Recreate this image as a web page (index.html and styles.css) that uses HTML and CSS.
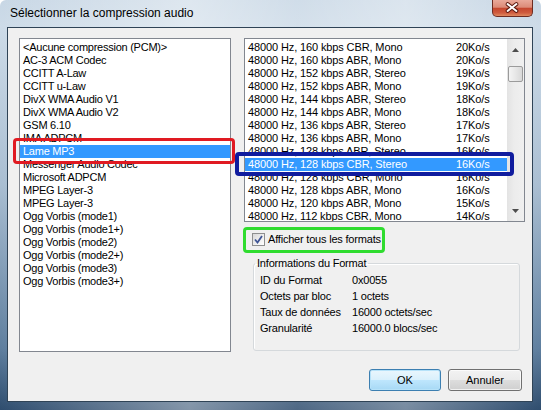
FILE: index.html
```html
<!DOCTYPE html>
<html lang="fr">
<head>
<meta charset="utf-8">
<title>Sélectionner la compression audio</title>
<link rel="stylesheet" href="styles.css">
</head>
<body>
<div class="window">
  <div class="titlebar">
    <span class="title">Sélectionner la compression audio</span>
    <div class="close">
      <svg width="41" height="17" viewBox="0 0 41 17">
        <path d="M16 5 L25 12 M25 5 L16 12" stroke="#5b1a10" stroke-width="4" stroke-linecap="round" fill="none"/>
        <path d="M16 5 L25 12 M25 5 L16 12" stroke="#ffffff" stroke-width="2" stroke-linecap="round" fill="none"/>
      </svg>
    </div>
  </div>
  <div class="client">
    <div class="main">
      <div class="list codecs">
        <div class="row">&lt;Aucune compression (PCM)&gt;</div>
        <div class="row">AC-3 ACM Codec</div>
        <div class="row">CCITT A-Law</div>
        <div class="row">CCITT u-Law</div>
        <div class="row">DivX WMA Audio V1</div>
        <div class="row">DivX WMA Audio V2</div>
        <div class="row">GSM 6.10</div>
        <div class="row">IMA ADPCM</div>
        <div class="row selected">Lame MP3</div>
        <div class="row">Messenger Audio Codec</div>
        <div class="row">Microsoft ADPCM</div>
        <div class="row">MPEG Layer-3</div>
        <div class="row">MPEG Layer-3</div>
        <div class="row">Ogg Vorbis (mode1)</div>
        <div class="row">Ogg Vorbis (mode1+)</div>
        <div class="row">Ogg Vorbis (mode2)</div>
        <div class="row">Ogg Vorbis (mode2+)</div>
        <div class="row">Ogg Vorbis (mode3)</div>
        <div class="row">Ogg Vorbis (mode3+)</div>
      </div>
      <div class="side">
        <div class="list formats">
          <div class="rows">
            <div class="row fmt"><span>48000 Hz, 160 kbps CBR, Mono</span><span>20Ko/s</span></div>
            <div class="row fmt"><span>48000 Hz, 160 kbps ABR, Mono</span><span>20Ko/s</span></div>
            <div class="row fmt"><span>48000 Hz, 152 kbps ABR, Stereo</span><span>19Ko/s</span></div>
            <div class="row fmt"><span>48000 Hz, 152 kbps ABR, Mono</span><span>19Ko/s</span></div>
            <div class="row fmt"><span>48000 Hz, 144 kbps ABR, Stereo</span><span>18Ko/s</span></div>
            <div class="row fmt"><span>48000 Hz, 144 kbps ABR, Mono</span><span>18Ko/s</span></div>
            <div class="row fmt"><span>48000 Hz, 136 kbps ABR, Stereo</span><span>17Ko/s</span></div>
            <div class="row fmt"><span>48000 Hz, 136 kbps ABR, Mono</span><span>17Ko/s</span></div>
            <div class="row fmt"><span>48000 Hz, 128 kbps ABR, Stereo</span><span>16Ko/s</span></div>
            <div class="row fmt selected"><span>48000 Hz, 128 kbps CBR, Stereo</span><span>16Ko/s</span></div>
            <div class="row fmt"><span>48000 Hz, 128 kbps CBR, Mono</span><span>16Ko/s</span></div>
            <div class="row fmt"><span>48000 Hz, 128 kbps ABR, Mono</span><span>16Ko/s</span></div>
            <div class="row fmt"><span>48000 Hz, 120 kbps ABR, Mono</span><span>15Ko/s</span></div>
            <div class="row fmt"><span>48000 Hz, 112 kbps CBR, Mono</span><span>14Ko/s</span></div>
          </div>
          <div class="scrollbar">
            <div class="arrow up"><svg width="7" height="4" viewBox="0 0 7 4"><path d="M0 4 L3.5 0 L7 4 Z" fill="#4d4d4d"/></svg></div>
            <div class="thumb"></div>
            <div class="arrow down"><svg width="7" height="4" viewBox="0 0 7 4"><path d="M0 0 L3.5 4 L7 0 Z" fill="#4d4d4d"/></svg></div>
          </div>
        </div>
        <label class="check">
          <span class="box"><svg width="11" height="11" viewBox="0 0 11 11"><path d="M2 5.5 L4.5 8.5 L9 2" stroke="#3e5495" stroke-width="1.8" fill="none"/></svg></span>
          <span>Afficher tous les formats</span>
        </label>
        <fieldset class="group">
          <legend>Informations du Format</legend>
          <div class="info">
            <span>ID du Format</span><span>0x0055</span>
            <span>Octets par bloc</span><span>1 octets</span>
            <span>Taux de données</span><span>16000 octets/sec</span>
            <span>Granularité</span><span>16000.0 blocs/sec</span>
          </div>
        </fieldset>
      </div>
    </div>
    <div class="buttons">
      <button class="btn default">OK</button>
      <button class="btn">Annuler</button>
    </div>
  </div>
  <div class="mark red"></div>
  <div class="mark blue"></div>
  <div class="mark green"></div>
</div>
</body>
</html>
```
FILE: styles.css
```css
* { box-sizing: border-box; }
html, body { margin: 0; padding: 0; }
body {
  width: 541px;
  height: 410px;
  overflow: hidden;
  font-family: "Liberation Sans", Arial, sans-serif;
  font-size: 11px;
  color: #000;
  background: #ffffff;
}
.window {
  position: relative;
  width: 541px;
  height: 410px;
  display: flex;
  flex-direction: column;
  padding: 0 8px 8px 7px;
  border-radius: 6px 6px 0 0;
  background:
    linear-gradient(90deg, rgba(255,255,255,0) 0, rgba(255,255,255,0.4) 35%, rgba(255,255,255,0.15) 55%, rgba(255,255,255,0.35) 75%, rgba(255,255,255,0) 100%),
    linear-gradient(180deg, #c8d7e5 0, #cddbe8 27px, #a9bed2 45%, #5f7f9f 85%, #2f4d6e 100%);
}
.titlebar {
  height: 27px;
  display: flex;
  align-items: flex-start;
}
.title {
  font-size: 12px;
  line-height: 14px;
  margin: 6px 0 0 3px;
  color: #000;
}
.close {
  margin-left: auto;
  width: 41px;
  height: 17px;
  border: 1px solid #6d2c22;
  border-top: none;
  border-radius: 0 0 5px 5px;
  background: linear-gradient(180deg, #e9a99a 0, #dc8b78 45%, #c5472f 52%, #cf5c3f 80%, #e08a60 100%);
  display: flex;
}
.close svg { margin: -1px 0 0 -1px; }
.client {
  flex: 1;
  background: #f0f0f0;
  border: 1px solid #2f4356;
  padding: 10px 7px 0 11px;
  display: flex;
  flex-direction: column;
}
.main {
  display: flex;
  gap: 13px;
}
.list {
  background: #fff;
  border: 1px solid #828790;
  overflow: hidden;
}
.codecs {
  width: 212px;
  height: 314px;
  padding-top: 2px;
  letter-spacing: -0.25px;
}
.row {
  height: 13px;
  line-height: 13px;
  padding-left: 3px;
  white-space: nowrap;
}
.row.selected {
  background: #3399ff;
  color: #fff;
}
.side {
  width: 281px;
  display: flex;
  flex-direction: column;
}
.formats {
  height: 184px;
  display: flex;
  letter-spacing: -0.12px;
}
.rows {
  flex: 1;
  padding-top: 2px;
  overflow: hidden;
}
.fmt {
  display: grid;
  grid-template-columns: 208px auto;
}
.scrollbar {
  width: 17px;
  background: linear-gradient(90deg, #e3e3e3 0, #ececec 40%, #f0f0f0 100%);
  display: flex;
  flex-direction: column;
  align-items: center;
}
.arrow {
  width: 17px;
  height: 17px;
  display: flex;
  align-items: center;
  justify-content: center;
}
.arrow.up { padding-top: 5px; }
.arrow.down { margin-top: auto; padding-bottom: 2px; margin-bottom: 1px; }
.thumb {
  width: 15px;
  height: 16px;
  margin-top: 10px;
  border: 1px solid #9b9b9b;
  border-radius: 2px;
  background: linear-gradient(90deg, #f4f4f4 0, #e7e7e7 50%, #d8d8d8 100%);
}
.check {
  margin: 11px 0 0 8px;
  height: 13px;
  display: flex;
  align-items: center;
  gap: 3px;
  line-height: 13px;
  letter-spacing: -0.2px;
}
.box {
  width: 13px;
  height: 13px;
  border: 1px solid #8e8f8f;
  background: linear-gradient(135deg, #d8d8d8 0, #f4f4f4 70%, #ffffff 100%);
  display: flex;
  letter-spacing: 0;
}
.group {
  margin: 11px 5px 0 9px;
  height: 94px;
  padding: 2px 6px 0 6px;
  border: 1px solid #d5d9dc;
  border-radius: 3px;
  box-shadow: inset 1px 1px 0 #ffffff;
  letter-spacing: -0.2px;
}
.group legend {
  padding: 0 2px;
  margin-left: -5px;
  line-height: 13px;
}
.info {
  display: grid;
  grid-template-columns: 92px auto;
  grid-auto-rows: 16px;
  line-height: 16px;
}
.buttons {
  margin-top: 17px;
  display: flex;
  justify-content: flex-end;
  gap: 7px;
  padding-right: 3px;
}
.btn {
  font-family: "Liberation Sans", Arial, sans-serif;
  font-size: 11px;
  height: 22px;
  width: 74px;
  border: 1px solid #707070;
  border-radius: 3px;
  background: linear-gradient(180deg, #f2f2f2 0, #ebebeb 48%, #dddddd 52%, #cfcfcf 100%);
  box-shadow: inset 0 0 0 1px rgba(255,255,255,0.7);
  color: #000;
  padding: 0;
}
.btn.default {
  width: 72px;
  border-color: #3c7fb1;
  background: linear-gradient(180deg, #eaf6fd 0, #d9f0fc 48%, #bee6fd 52%, #a7d9f5 100%);
  box-shadow: inset 0 0 0 1px #b6e2f9;
}
.mark {
  position: absolute;
  border: 3px solid;
  border-radius: 4px;
}
.red { left: 13px; top: 138px; width: 222px; height: 26px; border-color: #e01a22; }
.blue { left: 235px; top: 152px; width: 279px; height: 24px; border-color: #101c9e; border-width: 4px; }
.green { left: 243px; top: 227px; width: 142px; height: 26px; border-color: #2fdc2f; }
```
